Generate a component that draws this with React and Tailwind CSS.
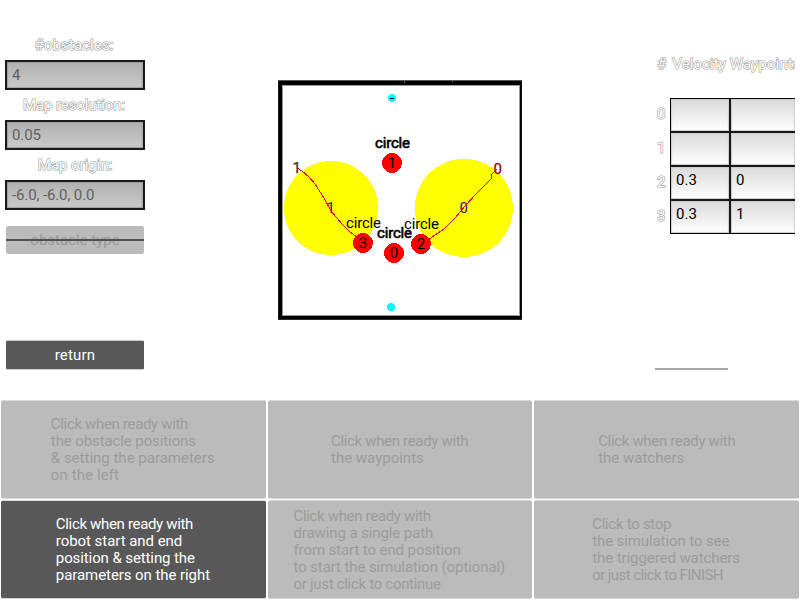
const TIGHT = 'tracking-[-0.33px]';
const SNUG = 'tracking-[-0.1px]';
const EVEN = 'tracking-[0px]';

const steps = [
  {
    width: 'w-[165px]',
    lines: [
      ['Click when ready with', TIGHT],
      ['the obstacle positions', SNUG],
      ['& setting the parameters', EVEN],
      ['on the left', 'tracking-[0.1px]'],
    ],
  },
  { width: 'w-[138px]', lines: [['Click when ready with', TIGHT], ['the waypoints', EVEN]] },
  { width: 'w-[137px]', lines: [['Click when ready with', TIGHT], ['the watchers', EVEN]] },
  {
    width: 'w-[155px]',
    active: true,
    lines: [
      ['Click when ready with', TIGHT],
      ['robot start and end', 'tracking-[-0.05px]'],
      ['position & setting the', SNUG],
      ['parameters on the right', 'tracking-[-0.07px]'],
    ],
  },
  {
    width: 'w-[213px]',
    lines: [
      ['Click when ready with', TIGHT],
      ['drawing a single path', SNUG],
      ['from start to end position', SNUG],
      ['to start the simulation (optional)', SNUG],
      ['or just click to continue', 'tracking-[-0.3px]'],
    ],
  },
  {
    width: 'w-[149px]',
    lines: [
      ['Click to stop', 'tracking-[-0.28px]'],
      ['the simulation to see', SNUG],
      ['the triggered watchers', 'tracking-[-0.08px]'],
      ['or just click to FINISH', 'tracking-[-0.56px]'],
    ],
  },
];

const fields = [
  { label: '#obstacles:', value: '4', spacing: 'tracking-[0.1px]' },
  { label: 'Map resolution:', value: '0.05', spacing: 'tracking-[-0.1px]' },
  { label: 'Map origin:', value: '-6.0, -6.0, 0.0', spacing: 'tracking-[0px] pl-0.5' },
];

const rows = [['', ''], ['', ''], ['0.3', '0'], ['0.3', '1']];

const outlined = 'text-white [-webkit-text-stroke:1.2px_#999999] [paint-order:stroke_fill]';

function Field({ label, value, spacing }) {
  return (
    <div className="h-[60px]">
      <div className={`h-[30px] pr-0.5 text-center leading-[30px] ${outlined} ${spacing}`}>{label}</div>
      <div className="flex h-[30px] items-center border-2 border-[#17191b] bg-linear-to-b from-[#b0b0b0] to-[#cbcbcb] pl-[5px] text-[#606060] tracking-[-0.12px] shadow-[inset_0_0_1px_1px_#a0a0a0]">
        {value}
      </div>
    </div>
  );
}

function Label({ x, y, w, children, stroke = 0, fill = '#000' }) {
  return (
    <text x={x} y={y} textLength={w} fill={fill} stroke={stroke ? fill : 'none'} strokeWidth={stroke}>
      {children}
    </text>
  );
}

function MapView() {
  return (
    <svg className="block h-[240px] w-[244px]" viewBox="278 80 244 240" fontSize="15">
      <rect x="278.5" y="80.5" width="243" height="239" fill="#fff" stroke="#555" />
      <path d="M278.3 81H521.8V319.5H278.3ZM282 85V316H520V85Z" fill="#000" fillRule="evenodd" />
      <path d="M282.5 316V85.5H519" fill="none" stroke="#999" />
      <path d="M282 315.5H519.5V85" fill="none" stroke="#999" />
      <path d="M404.5 80V83M452.5 80V82" stroke="#666" />
      <g shapeRendering="crispEdges">
        <circle cx="331" cy="208" r="47" fill="#ff0" />
        <circle cx="464" cy="208" r="49" fill="#ff0" />
        <circle cx="392" cy="98" r="4" fill="#0ff" />
        <circle cx="391" cy="307" r="4" fill="#0ff" />
        <circle cx="392" cy="163" r="10" fill="#f00" />
        <circle cx="394" cy="253" r="10" fill="#f00" />
        <circle cx="421" cy="244" r="10" fill="#f00" />
        <circle cx="363" cy="243" r="10" fill="#f00" />
        <path d="M390 98.5H394" stroke="#000" />
      </g>
      <Label x="292.5" y="173" fill="#333" stroke={0.3}>1</Label>
      <Label x="493.5" y="174" fill="#900010" stroke={0.3}>0</Label>
      <Label x="326.5" y="213" fill="#222a66">1</Label>
      <Label x="459.5" y="213" fill="#2020a0">0</Label>
      <g fill="none" stroke="#e8001c" shapeRendering="crispEdges">
        <path d="M297 168L302 171L309 177L315 184L324 198L331 211L342 224L350 232L357 237" />
        <path d="M497 169L492 174L491 179L477 193L465 206L455 218L444 229L435 235L427 241" />
      </g>
      <Label x="375" y="148" w="35" stroke={0.6}>circle</Label>
      <Label x="346" y="228" w="35">circle</Label>
      <Label x="377" y="238" w="35" stroke={0.6}>circle</Label>
      <Label x="404" y="229" w="35">circle</Label>
      <Label x="387.7" y="168">1</Label>
      <Label x="389.7" y="258">0</Label>
      <Label x="416.7" y="249">2</Label>
      <Label x="358.7" y="248">3</Label>
    </svg>
  );
}

export default function App() {
  return (
    <main className="flex h-[600px] w-[800px] flex-col overflow-hidden bg-white font-[Roboto,sans-serif] text-[15px]">
      <div className="flex h-[400px]">
        <aside className="w-[150px] px-[5px] pt-[30px]">
          {fields.map((f) => <Field key={f.label} {...f} />)}
          <div className="mx-px mt-4 grid h-7 place-items-center rounded-[2px] bg-[#bbb] text-[#999] tracking-[0px]">
            <span className="col-start-1 row-start-1">obstacle type</span>
            <span className="col-start-1 row-start-1 h-0.5 w-full bg-[#505050]" />
          </div>
          <div className="mx-px mt-[87px] flex h-7 items-center justify-center rounded-[1px] bg-[#585858] text-white tracking-[0.2px] shadow-[0_1px_0_#c8cccc,0_-1px_0_#c8cccc]">
            return
          </div>
        </aside>
        <section className="ml-32 pt-20"><MapView /></section>
        <aside className="ml-[133px] w-[140px] overflow-hidden pt-[54px]">
          <div className={`ml-[2px] flex h-5 gap-[6px] whitespace-nowrap leading-5 tracking-[0.1px] ${outlined}`}>
            <span>#</span><span>Velocity Waypoints</span>
          </div>
          <div className="mt-6 flex">
            <div className={`w-[15px] ${outlined}`}>
              {rows.map((_, i) => <div key={i} className="h-[34px] pl-[2px] leading-[33px]">{i}</div>)}
            </div>
            <div className="w-[125px] border-y border-l border-black">
              {rows.map((cells, i) => (
                <div key={i} className="flex h-[34px] border-b-2 border-[#151719] last:h-8 last:border-b-0">
                  {cells.map((value, c) => (
                    <div key={c} className={`${c ? 'flex-1' : 'w-[60px] shrink-0 border-r-2 border-[#151719]'} bg-linear-to-b from-[#dadada] to-white pl-[5px] pt-1 leading-[19px] shadow-[inset_0_0_1px_1px_#ccc]`}>{value}</div>
                  ))}
                </div>
              ))}
            </div>
          </div>
          <div className="mt-[134px] h-0.5 w-[73px] bg-[#a5a5a5]" />
        </aside>
      </div>
      <div className="grid h-[200px] grid-cols-3 grid-rows-2">
        {steps.map(({ lines, width, active }, i) => (
          <div key={i} className="px-px pb-px">
            <div className={`flex h-full items-center justify-center rounded-[2px] border-y border-[#d6d8d8] pt-px ${active ? 'bg-[#585858] text-white' : 'bg-[#bbb] text-[#9b9b9b]'}`}>
              <div className={`${width} whitespace-nowrap leading-[17px]`}>
                {lines.map(([line, spacing]) => <div key={line} className={spacing}>{line}</div>)}
              </div>
            </div>
          </div>
        ))}
      </div>
    </main>
  );
}
